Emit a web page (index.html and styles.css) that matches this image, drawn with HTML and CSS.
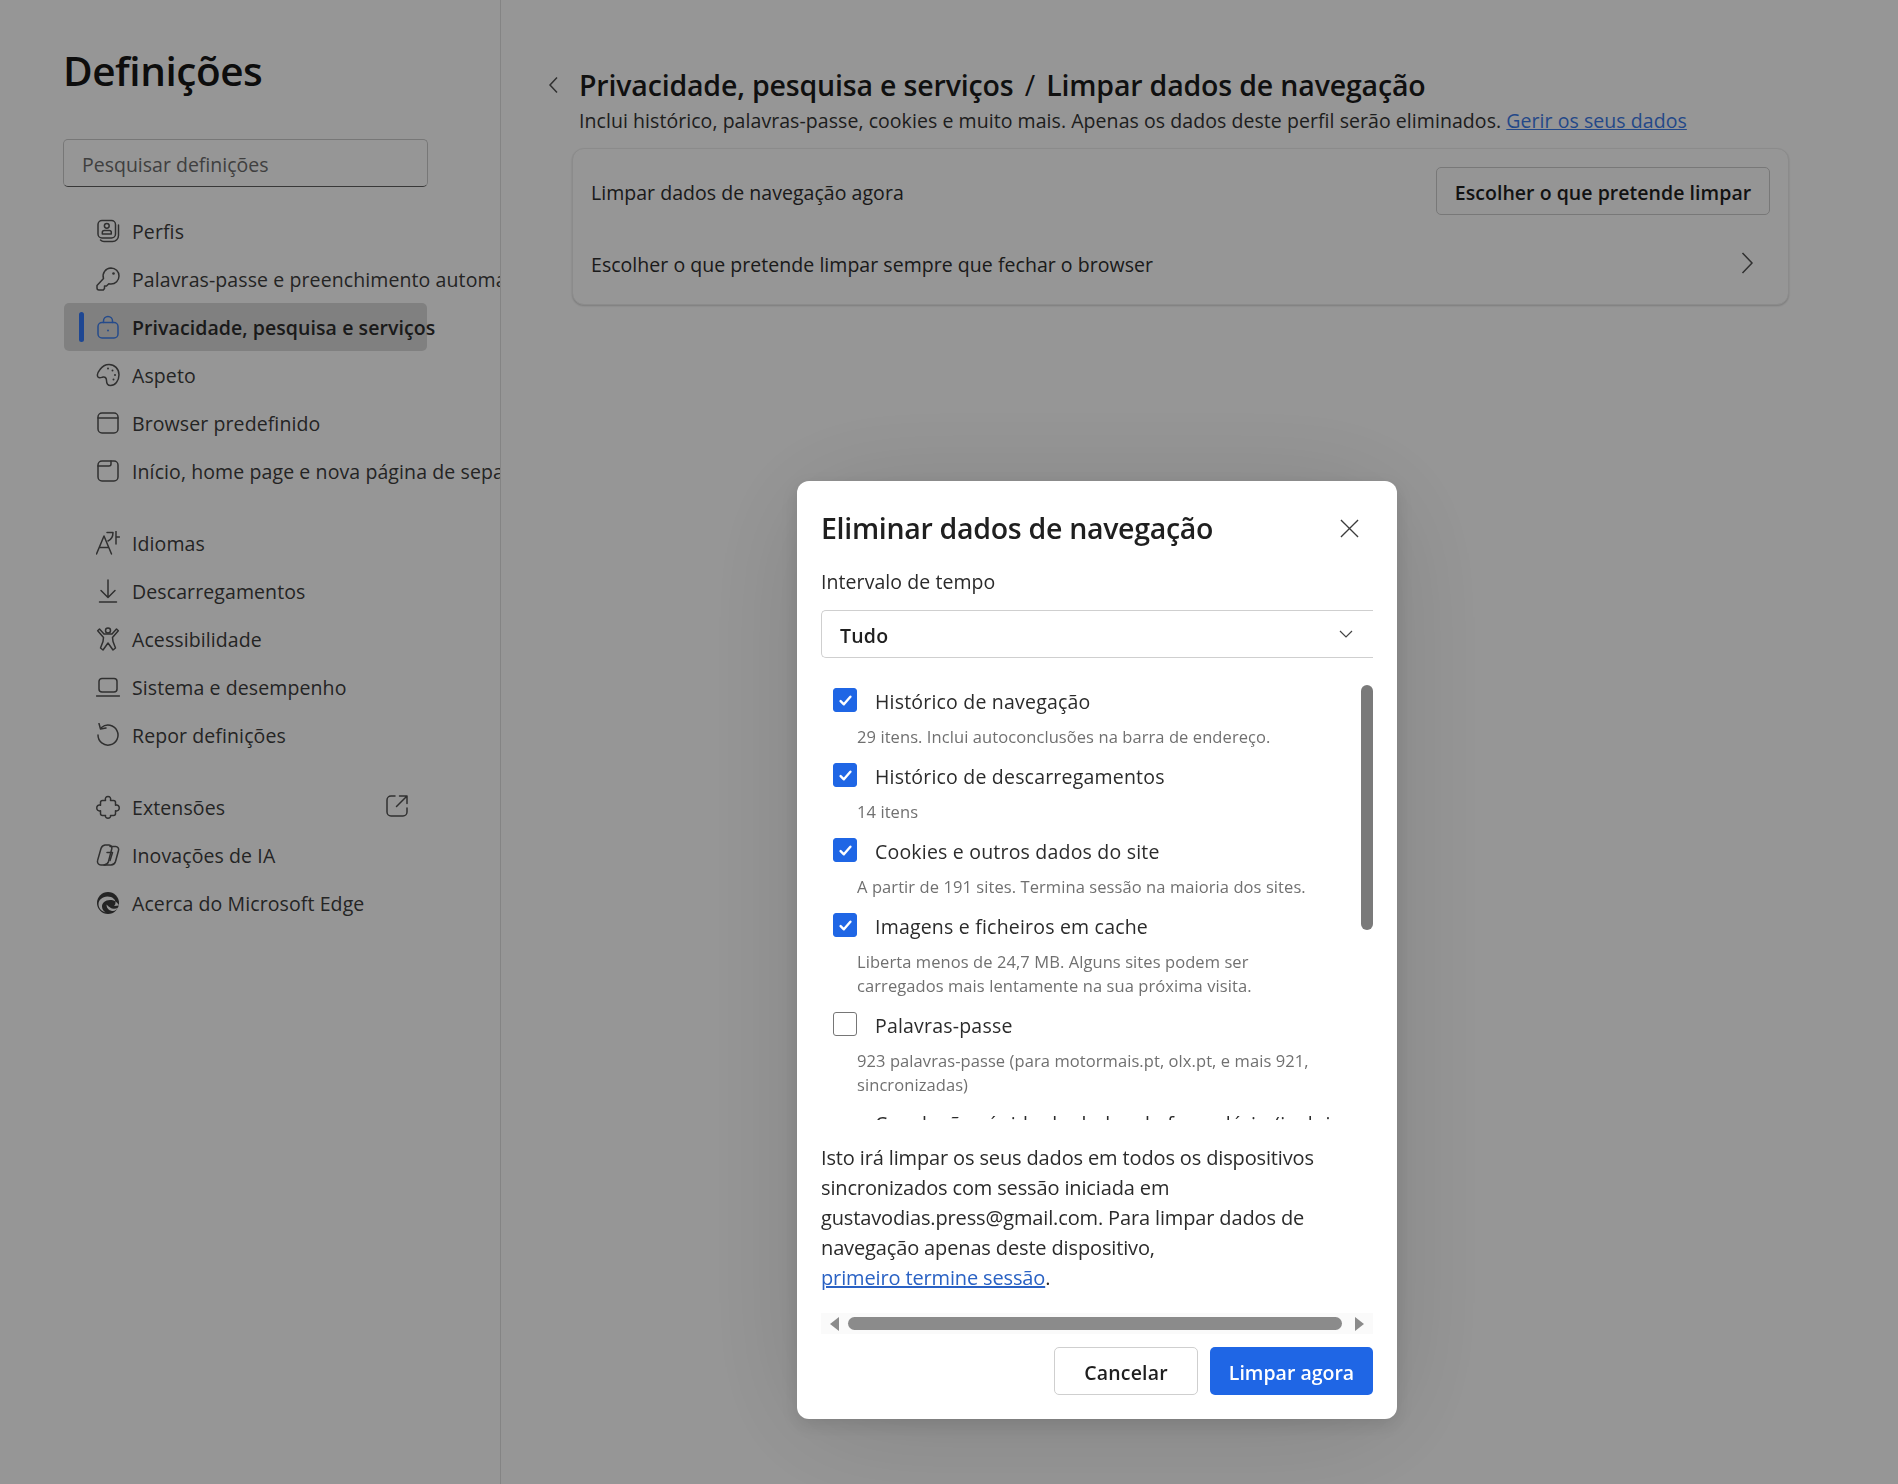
FILE: index.html
```html
<!DOCTYPE html>
<html lang="pt">
<head>
<meta charset="utf-8">
<title>Definições</title>
<link rel="stylesheet" href="styles.css">
</head>
<body>
<div class="page">
  <aside class="sidebar">
    <h1 class="app-title">Definições</h1>
    <div class="search"><span class="nudge">Pesquisar definições</span></div>
    <nav class="nav">
      <div class="nav-group">
        <a class="nav-item"><svg class="ico" viewBox="0 0 24 24"><rect x="2" y="1.500" width="17.500" height="17.500" rx="4"/><circle cx="10.800" cy="6.800" r="2.400"/><path d="M6.300 15v-1.500a2 2 0 0 1 2-2h5a2 2 0 0 1 2 2V15z"/><path d="M22.500 6v10.500a6 6 0 0 1-6 6H8a5 5 0 0 1-3.500-1.500"/></svg><span>Perfis</span></a>
        <a class="nav-item"><svg class="ico" viewBox="0 0 24 24"><path d="M15 1a8 8 0 0 1 0 16c-.8 0-1.500-.1-2.200-.3L10.500 19H8.500v2.500l-1.200 1.500H3a2 2 0 0 1-2-2v-2.500l6.500-7A8 8 0 0 1 15 1z"/><circle cx="17.500" cy="6.500" r="1.300" class="solid"/></svg><span>Palavras-passe e preenchimento automático</span></a>
        <a class="nav-item is-active"><svg class="ico" viewBox="0 0 24 24"><rect x="2" y="7.500" width="20" height="15.500" rx="4"/><path d="M7.500 7.500V6a4.500 4.500 0 0 1 9 0v1.500"/><circle cx="12" cy="15.500" r="1" class="solid"/></svg><span>Privacidade, pesquisa e serviços</span></a>
        <a class="nav-item"><svg class="ico" viewBox="0 0 24 24"><path d="M13 1.500c5.500 0 10 4.300 10 10.300 0 6.200-4 10.700-8.500 10.700-3.500 0-4-2.500-4-5 0-2.500-1.500-4-3.500-3.500-2 .5-3.500 1.500-5 0-1.500-2 0-5 2-7.500 2-2.800 5.500-5 9-5z"/><circle cx="12" cy="5.500" r="1" class="solid"/><circle cx="16.500" cy="7.500" r="1" class="solid"/><circle cx="19" cy="12" r="1" class="solid"/><circle cx="17.500" cy="16.500" r="1" class="solid"/></svg><span>Aspeto</span></a>
        <a class="nav-item"><svg class="ico" viewBox="0 0 24 24"><rect x="2" y="2" width="20" height="20" rx="4"/><path d="M2 7h20"/></svg><span>Browser predefinido</span></a>
        <a class="nav-item"><svg class="ico" viewBox="0 0 24 24"><rect x="2" y="2" width="20" height="20" rx="4"/><path d="M2 7h11a2 2 0 0 0 2-2V2"/></svg><span>Início, home page e nova página de separador</span></a>
      </div>
      <div class="nav-group">
        <a class="nav-item"><svg class="ico" viewBox="0 0 24 24"><path d="M.5 23 8 5l7.500 18M3.500 16.500h9"/><path d="M11 1.500h6c0 4-1.500 7-5 8.500M20 0v13M20 6h3.500"/></svg><span>Idiomas</span></a>
        <a class="nav-item"><svg class="ico" viewBox="0 0 24 24"><path d="M12 1v17M5 11.500l7 7 7-7M3.500 23h17"/></svg><span>Descarregamentos</span></a>
        <a class="nav-item"><svg class="ico" viewBox="0 0 24 24"><circle cx="12" cy="3.500" r="2.500"/><path d="M3.500 2 8 7h8l4.500-5 1.800 1.800L16.500 10.500l.5 4 2.500 6.500-2.500 2-5-7-5 7-2.500-2L7 14.500l.5-4L1.700 3.800z"/></svg><span>Acessibilidade</span></a>
        <a class="nav-item"><svg class="ico" viewBox="0 0 24 24"><rect x="3" y="3.500" width="18" height="13.500" rx="3"/><path d="M.5 21h23"/></svg><span>Sistema e desempenho</span></a>
        <a class="nav-item"><svg class="ico" viewBox="0 0 24 24"><path d="M5.500 4.500A10 10 0 1 1 2 12"/><path d="M3 .5l1.500 5.500L10 5"/></svg><span>Repor definições</span></a>
      </div>
      <div class="nav-group">
        <a class="nav-item"><svg class="ico" viewBox="0 0 24 24"><path d="M9.500 5.500c-1.500-5.500 6.500-5.500 5 0h3a2 2 0 0 1 2 2v2.700c5-1.500 5 7 0 5.500v2.800a2 2 0 0 1-2 2h-3c1 3.500-6 3.500-5 0h-3a2 2 0 0 1-2-2v-2.800c-5 1.500-5-7 0-5.500V7.500a2 2 0 0 1 2-2z"/></svg><span>Extensões</span><svg class="ico ext" viewBox="0 0 24 24"><path d="M10 2H6a4 4 0 0 0-4 4v12a4 4 0 0 0 4 4h12a4 4 0 0 0 4-4v-4"/><path d="M14.500 2H22v7.500M22 2 11.500 12.500"/></svg></a>
        <a class="nav-item"><svg class="ico" viewBox="0 0 24 24"><path d="M9 2h4a3 3 0 0 1 2.800 3.800L12.500 18.500A5 5 0 0 1 8 22H5a3.500 3.500 0 0 1-3.400-4.600L5 5.500A5 5 0 0 1 9 2z"/><path d="M14 3.500h5.500a3 3 0 0 1 3 4L19.500 18.500A5 5 0 0 1 15 22H8"/><path d="M11 9.500h5.500l-2.500 8"/></svg><span>Inovações de IA</span></a>
        <a class="nav-item"><svg class="ico edge" viewBox="0 0 24 24"><circle cx="12" cy="12" r="11"/><path class="edge-cut" d="M23 14.500c-1.500-3.500-5-5.500-9-5.500-5 0-8 3-8 6.500 0 2.500 1.500 4.500 3.500 6C5 20 2.500 17 2.500 13c0-3.500 3.500-7.500 9-7.500 5 0 8 3 8 6 0 1.500-.5 2.500-1.500 3.500z"/><path class="edge-cut" d="M10.500 13.500c0 4.500 3.500 6.500 6.500 6.500 2 0 4-1.500 5.500-3.500-1.500.8-3 1.200-4.500 1.200-3 0-5-1.500-7.500-4.200z"/></svg><span>Acerca do Microsoft Edge</span></a>
      </div>
    </nav>
  </aside>
  <main class="main">
    <div class="crumbs">
      <svg class="back" viewBox="0 0 24 24"><path d="M15 4.500 8 12l7 7.500"/></svg>
      <h2 class="crumb-title">Privacidade, pesquisa e serviços <span class="slash">/</span> Limpar dados de navegação</h2>
    </div>
    <p class="intro">Inclui histórico, palavras-passe, cookies e muito mais. Apenas os dados deste perfil serão eliminados. <a class="link">Gerir os seus dados</a></p>
    <section class="card">
      <div class="card-row"><span class="nudge">Limpar dados de navegação agora</span><button class="btn-outline"><span class="nudge">Escolher o que pretende limpar</span></button></div>
      <div class="card-row"><span class="nudge">Escolher o que pretende limpar sempre que fechar o browser</span><svg class="chev" viewBox="0 0 24 24"><path d="M8.500 2 18 12l-9.500 10"/></svg></div>
    </section>
  </main>
</div>
<div class="overlay">
  <div class="dialog">
    <header class="dlg-head">
      <h3 class="dlg-title">Eliminar dados de navegação</h3>
      <svg class="close" viewBox="0 0 20 20"><path d="M1 1l18 18M19 1 1 19"/></svg>
    </header>
    <div class="range-label">Intervalo de tempo</div>
    <div class="select"><span class="nudge">Tudo</span><svg class="sel-chev" viewBox="0 0 14 8"><path d="M1 1l6 6 6-6"/></svg></div>
    <div class="list">
      <div class="item"><div class="item-top"><span class="check on"><svg viewBox="0 0 12 12"><path d="M1.500 6.500 4.500 9.500 10.500 2.500"/></svg></span><span class="item-label">Histórico de navegação</span></div><div class="item-sub">29 itens. Inclui autoconclusões na barra de endereço.</div></div>
      <div class="item"><div class="item-top"><span class="check on"><svg viewBox="0 0 12 12"><path d="M1.500 6.500 4.500 9.500 10.500 2.500"/></svg></span><span class="item-label">Histórico de descarregamentos</span></div><div class="item-sub">14 itens</div></div>
      <div class="item"><div class="item-top"><span class="check on"><svg viewBox="0 0 12 12"><path d="M1.500 6.500 4.500 9.500 10.500 2.500"/></svg></span><span class="item-label">Cookies e outros dados do site</span></div><div class="item-sub">A partir de 191 sites. Termina sessão na maioria dos sites.</div></div>
      <div class="item"><div class="item-top"><span class="check on"><svg viewBox="0 0 12 12"><path d="M1.500 6.500 4.500 9.500 10.500 2.500"/></svg></span><span class="item-label">Imagens e ficheiros em cache</span></div><div class="item-sub">Liberta menos de 24,7 MB. Alguns sites podem ser<br>carregados mais lentamente na sua próxima visita.</div></div>
      <div class="item"><div class="item-top"><span class="check"></span><span class="item-label">Palavras-passe</span></div><div class="item-sub">923 palavras-passe (para motormais.pt, olx.pt, e mais 921,<br>sincronizadas)</div></div>
      <div class="item item-wrap"><div class="item-top"><span class="check"></span><span class="item-label">Conclusão rápida de dados de formulário (inclui</span></div></div>
      <div class="vscroll"></div>
    </div>
    <p class="note">Isto irá limpar os seus dados em todos os dispositivos<br>sincronizados com sessão iniciada em<br>gustavodias.press@gmail.com. Para limpar dados de<br>navegação apenas deste dispositivo,<br><a class="link dlg-link">primeiro termine sessão</a>.</p>
    <div class="hscroll"><span class="arrow-l"></span><span class="hthumb"></span><span class="arrow-r"></span></div>
    <footer class="dlg-foot">
      <button class="btn-cancel"><span class="nudge">Cancelar</span></button>
      <button class="btn-primary"><span class="nudge">Limpar agora</span></button>
    </footer>
  </div>
</div>
</body>
</html>
```
FILE: styles.css
```css
*{box-sizing:border-box}
html,body{margin:0;height:100%}
body{background:#fbfbfb;color:#1b1b1b;font-family:"Open Sans","Noto Sans","Liberation Sans",sans-serif;font-size:20px;overflow:hidden}
.nudge{display:inline-block;transform:translateY(1px)}
.page{display:flex;height:1484px}
.sidebar{width:501px;flex:none;border-right:1px solid #dcdcdc;padding:0 0 0 63px;overflow:hidden}
.app-title{margin:0;padding-top:45px;font-size:40.500px;line-height:52px;font-weight:600;letter-spacing:-.45px;color:#161616}
.search{margin-top:42px;width:365px;height:48px;border:1px solid #c6c6c6;border-bottom-color:#5e5e5e;border-radius:5px;padding:0 18px;display:flex;align-items:center;font-size:19.500px;color:#6a6a6a}
.nav{margin-top:20px;width:365px;display:flex;flex-direction:column;gap:24px}
.nav-item{position:relative;display:flex;align-items:center;height:48px;margin-left:1px;width:363px;padding-left:32px;gap:12px;white-space:nowrap;color:#3c3c3c;letter-spacing:.1px;border-radius:5px}
.nav-item span{font-size:19.500px}
.nav-item.is-active{background:#d6d6d6;font-weight:600;letter-spacing:.07px;color:#2c2c2c}
.nav-item.is-active::before{content:"";position:absolute;left:15px;top:9px;width:5px;height:30px;border-radius:3px;background:#3277f5}
.nav-item.is-active .ico{stroke:#3e7de8}
.nav-item.is-active .ico .solid{fill:#3e7de8}
.ico{width:24px;height:24px;flex:none;fill:none;stroke:#505050;stroke-width:1.500;stroke-linecap:round;stroke-linejoin:round}
.ico .solid{fill:#505050;stroke:none}
.ico.ext{position:absolute;left:321px;top:11px;width:24px;height:24px}
.ico.edge{stroke:none;fill:#3c3c3c}
.edge-cut{fill:#fbfbfb}
.main{flex:1;padding:65px 0 0 41px;min-width:0}
.crumbs{display:flex;align-items:center;gap:13px;height:40px}
.back{width:24px;height:24px;flex:none;fill:none;stroke:#505050;stroke-width:1.500}
.crumb-title{margin:0;font-size:28.500px;line-height:40px;font-weight:600;letter-spacing:-.17px;color:#1c1c1c;white-space:nowrap}
.slash{padding:0 4px;font-weight:400}
.intro{margin:2px 0 0 37px;line-height:28px;font-size:19.500px;letter-spacing:.06px;color:#333;white-space:nowrap}
.link{color:#3b78e3;text-decoration:underline}
.card{margin:13px 0 0 30px;width:1217px;height:157px;background:#fafafa;border:1px solid #e8e8e8;border-radius:12px;box-shadow:0 1px 2px rgba(0,0,0,.18);padding:18px 18px 0;display:flex;flex-direction:column;gap:24px}
.card-row{display:flex;align-items:center;justify-content:space-between;height:48px;font-size:19.500px;letter-spacing:.04px;color:#2d2d2d}
.btn-outline{height:48px;width:334px;background:#f9f9f9;border:1px solid #c8c8c8;border-radius:5px;font:600 19.500px "Open Sans",sans-serif;letter-spacing:.04px;color:#1f1f1f;white-space:nowrap;padding:0}
.chev{width:24px;height:24px;margin-right:12px;fill:none;stroke:#505050;stroke-width:1.500}
.overlay{position:fixed;inset:0;background:rgba(0,0,0,.4);padding:481px 0 0 296px;display:flex;justify-content:center;align-items:flex-start}
.dialog{width:600px;height:938px;background:#fff;border-radius:12px;padding:24px;box-shadow:0 10px 130px rgba(0,0,0,.14),0 6px 20px rgba(0,0,0,.12);display:flex;flex-direction:column;overflow:hidden}
.dlg-head{display:flex;align-items:center;justify-content:space-between;height:46px;margin-bottom:2px;padding-right:14px;flex:none}
.dlg-title{margin:0;font-size:28.500px;font-weight:600;letter-spacing:-.3px;color:#1f1f1f;white-space:nowrap}
.close{width:19px;height:19px;fill:none;stroke:#3c3c3c;stroke-width:1.400}
.range-label{margin-top:15px;line-height:28px;font-size:19.500px;letter-spacing:.07px;color:#2a2a2a;flex:none}
.select{margin-top:14px;height:48px;flex:none;border:1px solid #cfcfcf;border-right:0;border-radius:5px 0 0 5px;padding:0 20px 0 18px;display:flex;align-items:center;justify-content:space-between;font-size:19.500px;font-weight:600;letter-spacing:.2px;color:#1f1f1f}
.sel-chev{width:14px;height:8px;fill:none;stroke:#444;stroke-width:1.200}
.list{position:relative;height:448px;margin-top:14px;padding:16px 0 0 12px;overflow:hidden;flex:none}
.item{margin-bottom:14px}
.item-top{display:flex;align-items:flex-start;height:24px;margin-bottom:13px}
.check{width:24px;height:24px;flex:none;border-radius:3px;border:1px solid #767676;background:#fff;display:flex;align-items:center;justify-content:center}
.check.on{background:#1f66e5;border-color:#1f66e5}
.check svg{width:13px;height:13px;fill:none;stroke:#fff;stroke-width:2.200;stroke-linecap:round;stroke-linejoin:round}
.item-label{margin-left:18px;line-height:28px;font-size:19.500px;letter-spacing:.2px;color:#2b2b2b;white-space:nowrap}
.item-sub{margin-left:24px;font-size:16.500px;line-height:24px;letter-spacing:.08px;color:#707070}
.item-wrap .check{margin-top:16px}
.item-wrap .item-label{margin-top:-1px;letter-spacing:.45px}
.vscroll{position:absolute;top:13px;right:0;width:12px;height:245px;background:#7a7a7a;border-radius:6px}
.note{margin:23px 0 0;font-size:20px;line-height:30px;letter-spacing:-.14px;color:#2b2b2b;white-space:nowrap;flex:none}
.dlg-link{color:#2a62c4}
.hscroll{margin-top:20px;height:21px;flex:none;background:#fafafa;display:flex;align-items:center;padding:0 9px;gap:9px}
.hthumb{flex:1;height:13px;border-radius:7px;background:#8b8b8b;margin-right:4px}
.arrow-l,.arrow-r{width:0;height:0;border-style:solid;flex:none}
.arrow-l{border-width:7px 9px 7px 0;border-color:transparent #8b8b8b transparent transparent}
.arrow-r{border-width:7px 0 7px 9px;border-color:transparent transparent transparent #8b8b8b}
.dlg-foot{margin-top:13px;display:flex;justify-content:flex-end;gap:12px;flex:none}
.btn-cancel,.btn-primary{height:48px;border-radius:5px;font:600 19.500px "Open Sans",sans-serif;padding:0;white-space:nowrap}
.btn-cancel{width:144px;background:#fff;border:1px solid #cfcfcf;color:#1f1f1f;letter-spacing:.2px}
.btn-primary{width:163px;background:#1f66e5;border:0;color:#fff}
```
